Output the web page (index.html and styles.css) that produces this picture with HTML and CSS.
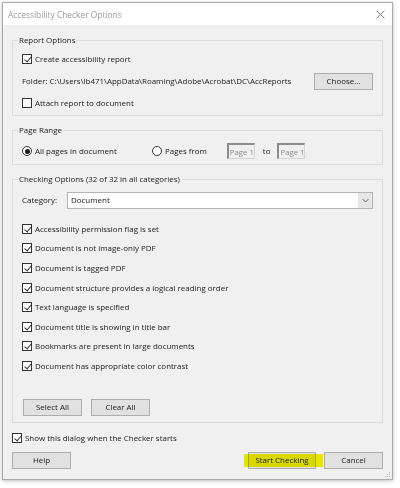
FILE: index.html
```html
<!DOCTYPE html>
<html>
<head>
<meta charset="utf-8">
<link rel="stylesheet" href="styles.css">
</head>
<body>
<div class="dialog">
  <div class="titlebar">
    <span class="title">Accessibility Checker Options</span>
    <svg class="close" width="9" height="9" viewBox="0 0 9 9"><path d="M0.5 0.5 L8.5 8.5 M8.5 0.5 L0.5 8.5" stroke="#777" stroke-width="0.9" fill="none"/></svg>
  </div>
  <div class="body">
    <fieldset class="group g1">
      <legend>Report Options</legend>
      <div class="row"><span class="cb on"></span><span>Create accessibility report</span></div>
      <div class="row folder"><span>Folder: C:\Users\lb471\AppData\Roaming\Adobe\Acrobat\DC\AccReports</span><span class="btn choose">Choose...</span></div>
      <div class="row"><span class="cb"></span><span>Attach report to document</span></div>
    </fieldset>

    <fieldset class="group g2">
      <legend>Page Range</legend>
      <div class="row range">
        <span class="opt all"><span class="radio on"></span><span>All pages in document</span></span>
        <span class="opt"><span class="radio"></span><span>Pages from</span></span>
        <span class="field">Page 1</span>
        <span class="to">to</span>
        <span class="field f2">Page 1</span>
      </div>
    </fieldset>

    <fieldset class="group g3">
      <legend>Checking Options (32 of 32 in all categories)</legend>
      <div class="row cat"><span class="catlabel">Category:</span>
        <span class="select"><span class="selval">Document</span><span class="arrow"><svg width="7" height="5" viewBox="0 0 7 5"><path d="M0.5 1 L3.5 4 L6.5 1" stroke="#555" stroke-width="0.9" fill="none"/></svg></span></span>
      </div>
      <div class="checks">
        <div class="crow"><span class="cb on"></span><span>Accessibility permission flag is set</span></div>
        <div class="crow"><span class="cb on"></span><span>Document is not image-only PDF</span></div>
        <div class="crow"><span class="cb on"></span><span>Document is tagged PDF</span></div>
        <div class="crow"><span class="cb on"></span><span>Document structure provides a logical reading order</span></div>
        <div class="crow"><span class="cb on"></span><span>Text language is specified</span></div>
        <div class="crow"><span class="cb on"></span><span>Document title is showing in title bar</span></div>
        <div class="crow"><span class="cb on"></span><span>Bookmarks are present in large documents</span></div>
        <div class="crow"><span class="cb on"></span><span>Document has appropriate color contrast</span></div>
      </div>
      <div class="selbtns"><span class="btn">Select All</span><span class="btn">Clear All</span></div>
    </fieldset>

    <div class="row show"><span class="cb on"></span><span>Show this dialog when the Checker starts</span></div>

    <div class="footer">
      <span class="btn">Help</span>
      <span class="spacer"></span>
      <span class="btn start">Start Checking</span>
      <span class="btn">Cancel</span>
    </div>
    <svg class="grip" width="6" height="6" viewBox="0 0 6 6"><g fill="#b5b5b5"><rect x="4" y="0" width="1" height="1"/><rect x="2" y="2" width="1" height="1"/><rect x="4" y="2" width="1" height="1"/><rect x="0" y="4" width="1" height="1"/><rect x="2" y="4" width="1" height="1"/><rect x="4" y="4" width="1" height="1"/></g></svg>
  </div>
</div>
</body>
</html>
```
FILE: styles.css
```css
* { box-sizing: border-box; }
html, body { margin: 0; padding: 0; background: #fff; }
body {
  width: 400px; height: 488px; overflow: hidden;
  font-family: "Open Sans", "Noto Sans", sans-serif;
  font-size: 7.95px; color: #1a1a1a;
}
.dialog {
  margin: 2px 0 0 2px;
  width: 391px; height: 478px;
  border: 1px solid #a9a9a9;
  box-shadow: 0 1px 4px rgba(0,0,0,0.25);
  display: flex; flex-direction: column;
  background: #f0f0f0;
}
.titlebar {
  height: 22px; background: #fff;
  display: flex; align-items: center; justify-content: space-between;
  padding: 0 7px 0 5px;
}
.title { color: #9a9a9a; font-size: 8.4px; }
.body {
  flex: 1; position: relative;
  padding: 9px 9px 0 9px;
  display: flex; flex-direction: column;
}
.group {
  margin: 0; border: 1px solid #dcdcdc;
  padding: 0 9px 0 9px;
  min-width: 0;
}
legend {
  padding: 0 1px; margin-left: -4px;
  line-height: 12px; height: 12px;
}
.row { display: flex; align-items: center; height: 22px; white-space: nowrap; }
.g1 { padding-top: 2px; padding-bottom: 1px; }
.g2 { margin-top: 8px; padding-top: 4px; padding-bottom: 2px; }
.g3 { margin-top: 8px; padding-top: 5px; padding-bottom: 6px; }
.cb {
  width: 10px; height: 10px; border: 1px solid #333; background: #fff;
  position: relative; margin-right: 3px; flex: none;
}
.cb.on::after {
  content: ""; position: absolute; left: 2.5px; top: 0px;
  width: 3px; height: 6px; border: solid #333; border-width: 0 1px 1px 0;
  transform: rotate(40deg);
}
.folder { justify-content: space-between; }
.btn {
  display: inline-flex; align-items: center; justify-content: center;
  height: 17px; width: 59px; background: #e1e1e1; border: 1px solid #adadad;
  flex: none; white-space: nowrap;
}
.opt { display: inline-flex; align-items: center; }
.all { width: 130px; }
.radio {
  width: 10px; height: 10px; border: 1px solid #333; border-radius: 50%;
  background: #fff; margin-right: 3px; display: inline-flex; align-items: center; justify-content: center;
}
.radio.on::after { content: ""; width: 5px; height: 5px; border-radius: 50%; background: #1a1a1a; }
.field {
  margin-left: 20px; width: 28px; height: 16px;
  border: 1px solid #d4d4d4; border-left: 2px solid #8c8c8c; border-top: 2px solid #8c8c8c;
  color: #8a8a8a; display: inline-flex; align-items: center; padding-left: 1px;
  white-space: nowrap; overflow: hidden; font-size: 7.8px;
}
.field.f2 { margin-left: 7px; }
.to { margin-left: 8px; }
.cat { height: 20px; }
.catlabel { width: 45px; }
.select {
  flex: 1; height: 17px; background: #fff; border: 1px solid #b5b5b5;
  display: flex; align-items: stretch;
}
.selval { flex: 1; display: flex; align-items: center; padding-left: 3px; }
.arrow { width: 14px; background: #e6e6e6; display: flex; align-items: center; justify-content: center; }
.checks { margin-top: 9px; display: flex; flex-direction: column; }
.crow { display: flex; align-items: center; height: 19.6px; white-space: nowrap; }
.selbtns { margin-top: 23px; display: flex; gap: 9px; padding-left: 1px; }
.show { height: 20px; margin-top: 5px; }
.footer { margin-top: 4px; display: flex; align-items: center; }
.spacer { flex: 1; }
.start { width: 68px; margin-right: 8px; position: relative; }
.start::before {
  content: ""; position: absolute; left: -5px; right: -8px; top: 1px; bottom: 1px;
  background: #f5f500; mix-blend-mode: multiply;
}
.grip { position: absolute; right: 1px; bottom: 1px; }
```
